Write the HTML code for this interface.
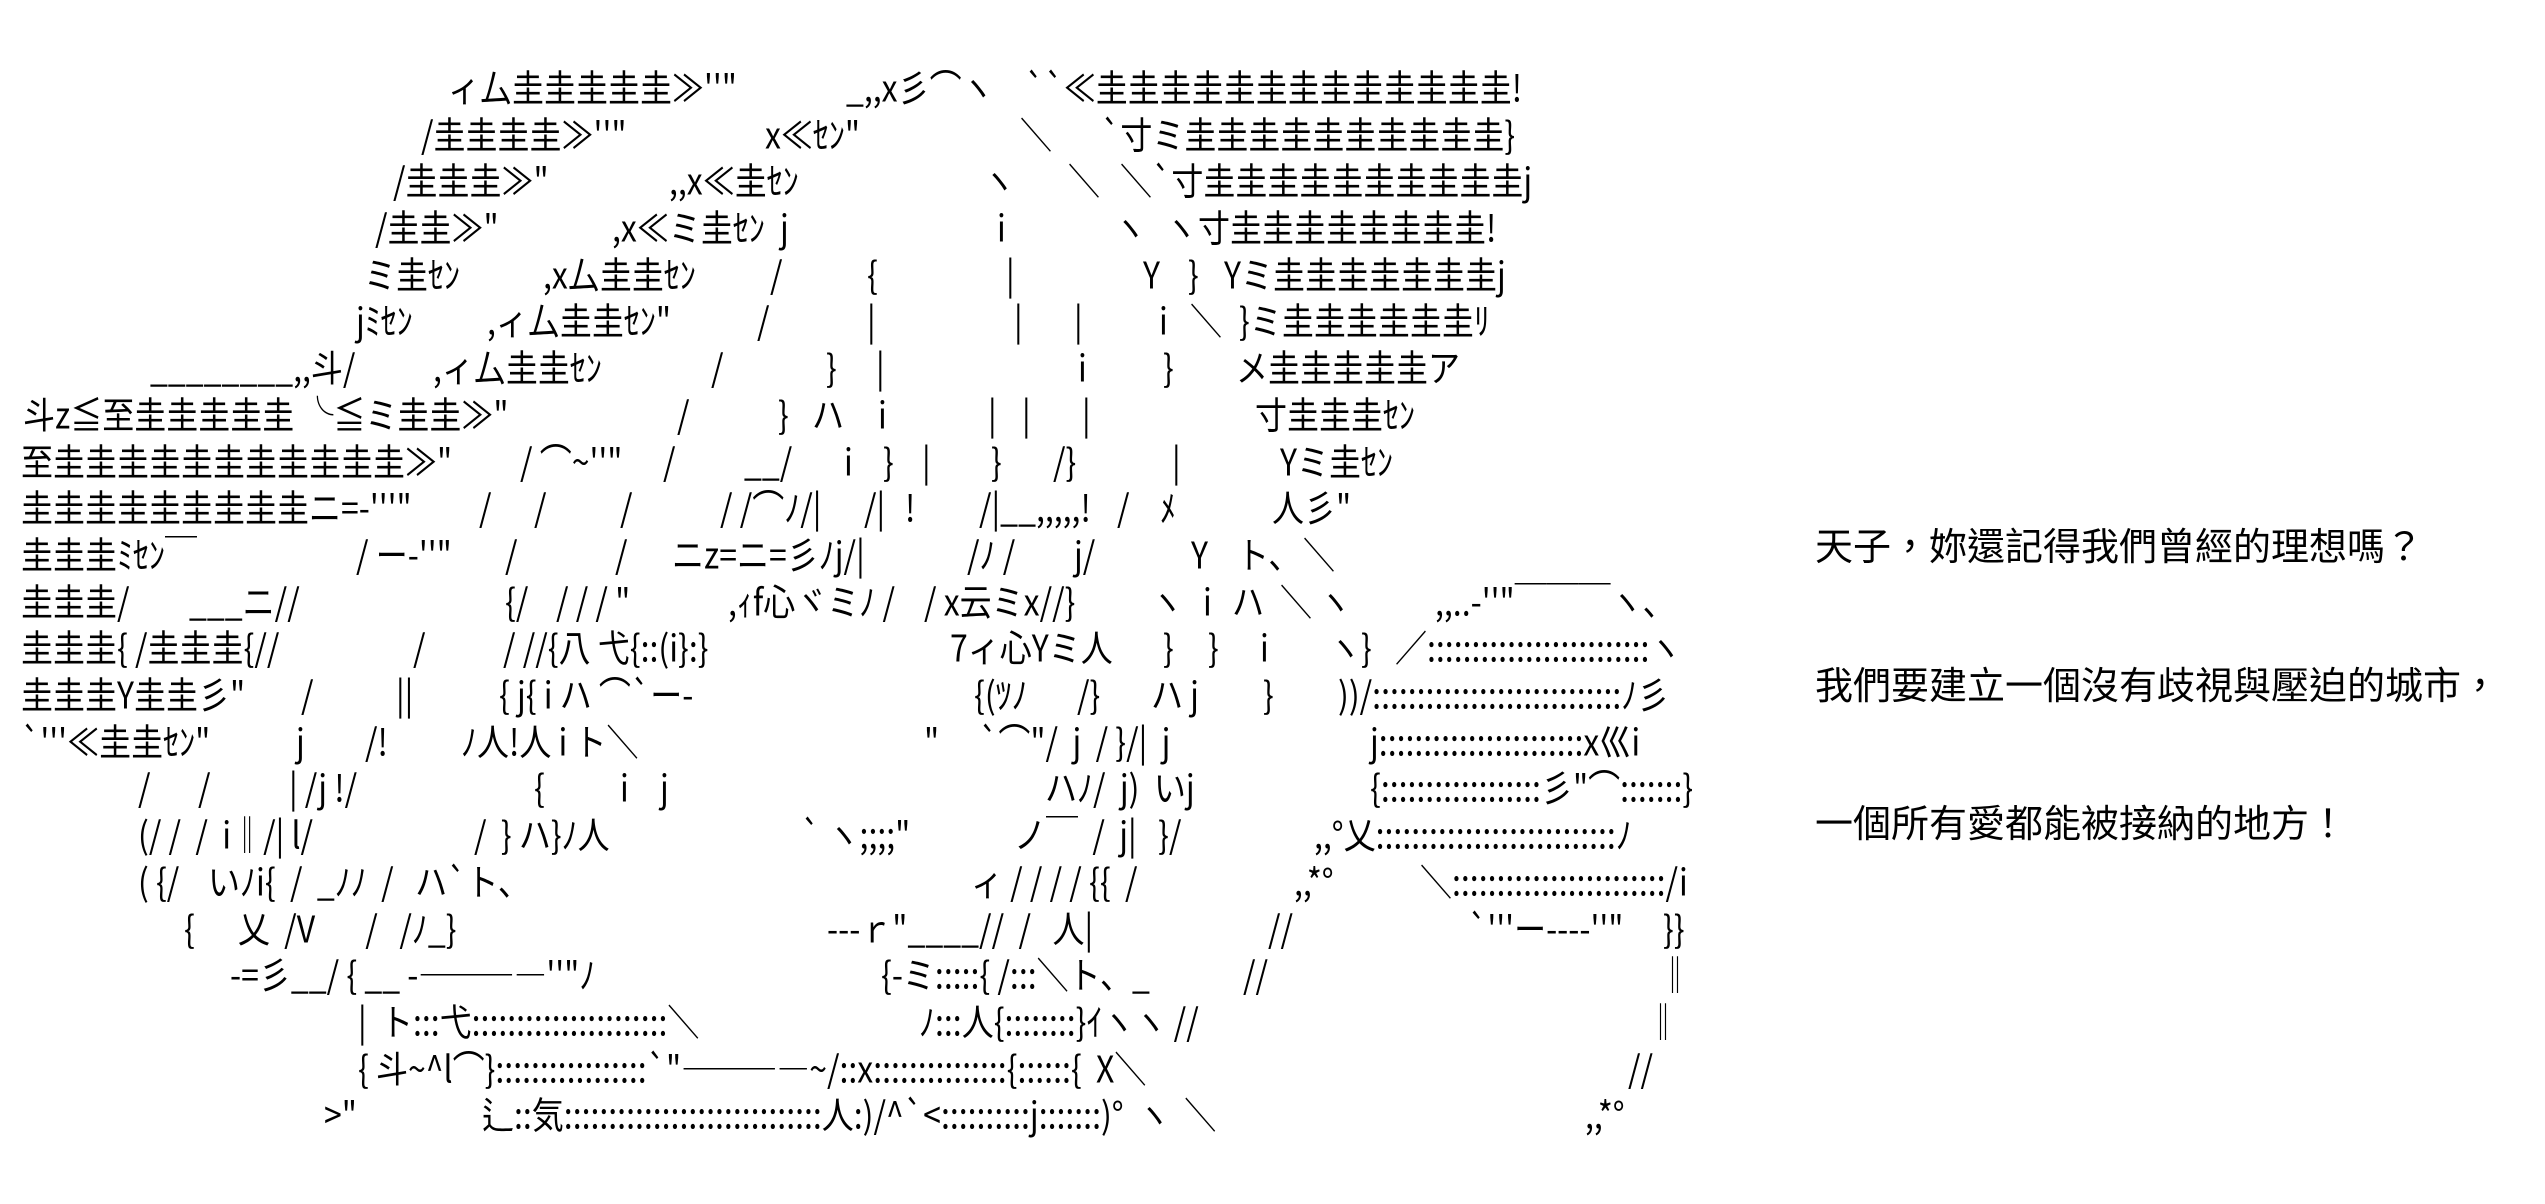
<!DOCTYPE html>
<html><head><meta charset="utf-8"><style>
html,body{margin:0;padding:0;background:#fff;width:2545px;height:1204px;overflow:hidden;position:relative}
.a{position:absolute;white-space:pre;font:32px/32px "Noto Sans CJK JP","IPAGothic",sans-serif;color:#000;transform:scaleY(1.15);transform-origin:0 0}
.c{position:absolute;white-space:pre;font:38px/38px "Liberation Sans","Noto Sans CJK TC",sans-serif;color:#000;left:1815px}
</style></head><body>
<span class="a" style="left:448px;top:68px">ィ厶圭圭圭圭圭≫''"</span>
<span class="a" style="left:846px;top:68px">_,,x彡⌒ヽ</span>
<span class="a" style="left:1025px;top:68px">``≪圭圭圭圭圭圭圭圭圭圭圭圭圭!</span>

<span class="a" style="left:421px;top:115px">/圭圭圭圭≫''"</span>
<span class="a" style="left:765px;top:115px">x≪ｾﾝ"</span>
<span class="a" style="left:1020px;top:115px">＼</span>
<span class="a" style="left:1101px;top:115px">`寸ミ圭圭圭圭圭圭圭圭圭圭}</span>

<span class="a" style="left:393px;top:161px">/圭圭圭≫"</span>
<span class="a" style="left:669px;top:161px">,,x≪圭ｾﾝ</span>
<span class="a" style="left:983px;top:161px">ヽ</span>
<span class="a" style="left:1068px;top:161px">＼</span>
<span class="a" style="left:1120px;top:161px">＼`寸圭圭圭圭圭圭圭圭圭圭j</span>

<span class="a" style="left:375px;top:208px">/圭圭≫"</span>
<span class="a" style="left:612px;top:208px">,x≪ミ圭ｾﾝ</span>
<span class="a" style="left:780px;top:208px">j</span>
<span class="a" style="left:997px;top:208px">i</span>
<span class="a" style="left:1114px;top:208px">ヽ</span>
<span class="a" style="left:1165px;top:208px">ヽ</span>
<span class="a" style="left:1198px;top:208px">寸圭圭圭圭圭圭圭圭!</span>

<span class="a" style="left:364px;top:255px">ミ圭ｾﾝ</span>
<span class="a" style="left:543px;top:255px">,x厶圭圭ｾﾝ</span>
<span class="a" style="left:770px;top:255px">/</span>
<span class="a" style="left:867px;top:255px">{</span>
<span class="a" style="left:1006px;top:255px">|</span>
<span class="a" style="left:1143px;top:255px">Y</span>
<span class="a" style="left:1188px;top:255px">}</span>
<span class="a" style="left:1224px;top:255px">Yミ圭圭圭圭圭圭圭j</span>

<span class="a" style="left:356px;top:301px">jﾐｾﾝ</span>
<span class="a" style="left:487px;top:301px">,ィ厶圭圭ｾﾝ"</span>
<span class="a" style="left:757px;top:301px">/</span>
<span class="a" style="left:867px;top:301px">|</span>
<span class="a" style="left:1014px;top:301px">|</span>
<span class="a" style="left:1074px;top:301px">|</span>
<span class="a" style="left:1159px;top:301px">i</span>
<span class="a" style="left:1190px;top:301px">＼</span>
<span class="a" style="left:1239px;top:301px">}ミ圭圭圭圭圭圭ﾘ</span>

<span class="a" style="left:150px;top:348px">________,,斗/</span>
<span class="a" style="left:433px;top:348px">,ィ厶圭圭ｾﾝ</span>
<span class="a" style="left:711px;top:348px">/</span>
<span class="a" style="left:826px;top:348px">}</span>
<span class="a" style="left:876px;top:348px">|</span>
<span class="a" style="left:1078px;top:348px">i</span>
<span class="a" style="left:1163px;top:348px">}</span>
<span class="a" style="left:1236px;top:348px">メ圭圭圭圭圭ア</span>

<span class="a" style="left:23px;top:395px">斗z≦至圭圭圭圭圭 ╰≦ミ圭圭≫"</span>
<span class="a" style="left:677px;top:395px">/</span>
<span class="a" style="left:778px;top:395px">}</span>
<span class="a" style="left:812px;top:395px">ハ</span>
<span class="a" style="left:878px;top:395px">i</span>
<span class="a" style="left:988px;top:395px">|</span>
<span class="a" style="left:1022px;top:395px">|</span>
<span class="a" style="left:1082px;top:395px">|</span>
<span class="a" style="left:1255px;top:395px">寸圭圭圭ｾﾝ</span>

<span class="a" style="left:21px;top:442px">至圭圭圭圭圭圭圭圭圭圭圭≫"</span>
<span class="a" style="left:520px;top:442px">/ ⌒~''"</span>
<span class="a" style="left:663px;top:442px">/</span>
<span class="a" style="left:744px;top:442px">__/</span>
<span class="a" style="left:844px;top:442px">i</span>
<span class="a" style="left:883px;top:442px">}</span>
<span class="a" style="left:922px;top:442px">|</span>
<span class="a" style="left:991px;top:442px">}</span>
<span class="a" style="left:1053px;top:442px">/}</span>
<span class="a" style="left:1172px;top:442px">|</span>
<span class="a" style="left:1280px;top:442px">Yミ圭ｾﾝ</span>

<span class="a" style="left:21px;top:488px">圭圭圭圭圭圭圭圭圭ニ=-'''"</span>
<span class="a" style="left:479px;top:488px">/</span>
<span class="a" style="left:534px;top:488px">/</span>
<span class="a" style="left:620px;top:488px">/</span>
<span class="a" style="left:720px;top:488px">/ /⌒ﾉ/|</span>
<span class="a" style="left:864px;top:488px">/|</span>
<span class="a" style="left:905px;top:488px">!</span>
<span class="a" style="left:979px;top:488px">/|__,,,,,!</span>
<span class="a" style="left:1117px;top:488px">/</span>
<span class="a" style="left:1160px;top:488px">ﾒ</span>
<span class="a" style="left:1272px;top:488px">人彡"</span>

<span class="a" style="left:21px;top:535px">圭圭圭ﾐｾﾝ￣</span>
<span class="a" style="left:356px;top:535px">/ ー-''"</span>
<span class="a" style="left:505px;top:535px">/</span>
<span class="a" style="left:615px;top:535px">/</span>
<span class="a" style="left:672px;top:535px">ニz=ニ=彡ﾉj/|</span>
<span class="a" style="left:967px;top:535px">/ﾉ /</span>
<span class="a" style="left:1074px;top:535px">j/</span>
<span class="a" style="left:1191px;top:535px">Y</span>
<span class="a" style="left:1237px;top:535px">ト、</span>
<span class="a" style="left:1303px;top:535px">＼</span>

<span class="a" style="left:21px;top:582px">圭圭圭/</span>
<span class="a" style="left:189px;top:582px">___ニ//</span>
<span class="a" style="left:505px;top:582px">{/</span>
<span class="a" style="left:556px;top:582px">/ / / "</span>
<span class="a" style="left:728px;top:582px">,ｨf心ヾミﾉ /</span>
<span class="a" style="left:924px;top:582px">/ x云ミx//}</span>
<span class="a" style="left:1151px;top:582px">ヽ</span>
<span class="a" style="left:1203px;top:582px">i</span>
<span class="a" style="left:1232px;top:582px">ハ</span>
<span class="a" style="left:1280px;top:582px">＼ ヽ</span>
<span class="a" style="left:1435px;top:582px">,,..-''"￣￣￣ヽ、</span>

<span class="a" style="left:21px;top:628px">圭圭圭{ /圭圭圭{//</span>
<span class="a" style="left:413px;top:628px">/</span>
<span class="a" style="left:503px;top:628px">/ //{八 弋{::(i}:}</span>
<span class="a" style="left:950px;top:628px">7ィ心Yミ人</span>
<span class="a" style="left:1163px;top:628px">}</span>
<span class="a" style="left:1208px;top:628px">}</span>
<span class="a" style="left:1260px;top:628px">i</span>
<span class="a" style="left:1329px;top:628px">ヽ}</span>
<span class="a" style="left:1395px;top:628px">／:::::::::::::::::::::::::ヽ</span>

<span class="a" style="left:21px;top:675px">圭圭圭Y圭圭彡"</span>
<span class="a" style="left:301px;top:675px">/</span>
<span class="a" style="left:396px;top:675px">||</span>
<span class="a" style="left:499px;top:675px">{ j{ i ハ ⌒`ー-</span>
<span class="a" style="left:974px;top:675px">{(ﾂﾉ</span>
<span class="a" style="left:1077px;top:675px">/}</span>
<span class="a" style="left:1151px;top:675px">ハ j</span>
<span class="a" style="left:1263px;top:675px">}</span>
<span class="a" style="left:1338px;top:675px">))/::::::::::::::::::::::::::::ﾉ彡</span>

<span class="a" style="left:21px;top:722px">`'''≪圭圭ｾﾝ"</span>
<span class="a" style="left:296px;top:722px">j</span>
<span class="a" style="left:365px;top:722px">/!</span>
<span class="a" style="left:461px;top:722px">ﾉ人!人 i ト＼</span>
<span class="a" style="left:924px;top:722px">"</span>
<span class="a" style="left:979px;top:722px">`⌒"/  j  / }/|  j</span>
<span class="a" style="left:1370px;top:722px">j:::::::::::::::::::::::x巛i</span>

<span class="a" style="left:138px;top:768px">/</span>
<span class="a" style="left:198px;top:768px">/</span>
<span class="a" style="left:289px;top:768px">| /j !/</span>
<span class="a" style="left:534px;top:768px">{</span>
<span class="a" style="left:620px;top:768px">i</span>
<span class="a" style="left:660px;top:768px">j</span>
<span class="a" style="left:1045px;top:768px">ハﾉ/  j)  いj</span>
<span class="a" style="left:1370px;top:768px">{::::::::::::::::::彡"⌒:::::::}</span>

<span class="a" style="left:138px;top:815px">(/ /  /  i‖/| l/</span>
<span class="a" style="left:474px;top:815px">/  } ハ}ﾉ人</span>
<span class="a" style="left:801px;top:815px">` ヽ;;;;"</span>
<span class="a" style="left:1014px;top:815px">ノ￣  /  j|   }/</span>
<span class="a" style="left:1314px;top:815px">,,°乂:::::::::::::::::::::::::::ﾉ</span>

<span class="a" style="left:138px;top:862px">( {/    いﾉi{  /  _ﾉﾉ  /   ハ`ト、</span>
<span class="a" style="left:971px;top:862px">ィ / / / / {{  /</span>
<span class="a" style="left:1294px;top:862px">,,*°</span>
<span class="a" style="left:1420px;top:862px">＼::::::::::::::::::::::::/i</span>

<span class="a" style="left:184px;top:909px">{      乂  /V       /   /ﾉ_}</span>
<span class="a" style="left:827px;top:909px">---ｒ"____//  /   人|</span>
<span class="a" style="left:1268px;top:909px">//</span>
<span class="a" style="left:1468px;top:909px">`'''ー----''"</span>
<span class="a" style="left:1663px;top:909px">}}</span>

<span class="a" style="left:230px;top:955px">-=彡__/ { __ -――――''"ﾉ</span>
<span class="a" style="left:881px;top:955px">{-ミ:::::{ /:::＼ト、_</span>
<span class="a" style="left:1243px;top:955px">//</span>
<span class="a" style="left:1659px;top:955px">‖</span>

<span class="a" style="left:358px;top:1002px">|  ト:::弋::::::::::::::::::::::＼</span>
<span class="a" style="left:919px;top:1002px">ﾉ:::人{::::::::}ｲヽヽ //</span>
<span class="a" style="left:1647px;top:1002px">‖</span>

<span class="a" style="left:358px;top:1049px">{ 斗~^l⌒}:::::::::::::::::`"――――~/::x:::::::::::::::{::::::{  X＼</span>
<span class="a" style="left:1628px;top:1049px">//</span>

<span class="a" style="left:324px;top:1095px">&gt;"</span>
<span class="a" style="left:482px;top:1095px">辶::気:::::::::::::::::::::::::::::人:)/^`&lt;::::::::::j:::::::)°  ヽ  ＼</span>
<span class="a" style="left:1585px;top:1095px">,,*°</span>

<span class="c" style="top:529px">天子，妳還記得我們曾經的理想嗎？</span>
<span class="c" style="top:668px">我們要建立一個沒有歧視與壓迫的城市，</span>
<span class="c" style="top:806px">一個所有愛都能被接納的地方！</span>
</body></html>
